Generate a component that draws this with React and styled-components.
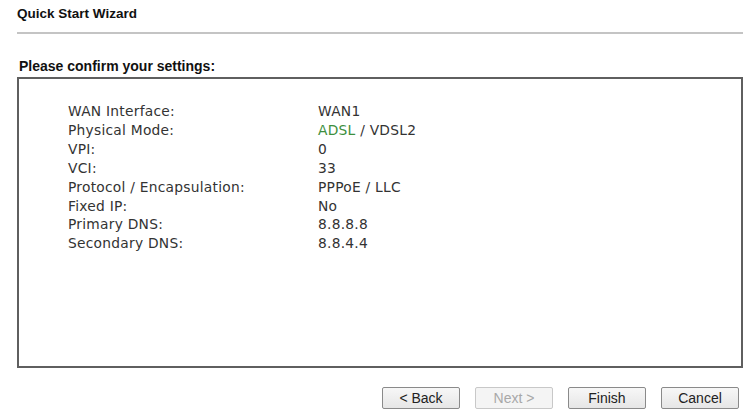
import React from "react";
import styled, { createGlobalStyle } from "styled-components";

const Global = createGlobalStyle`
  html, body { margin: 0; padding: 0; background: #fff; }
  body { font-family: "Liberation Sans", Arial, sans-serif; }
`;

const Page = styled.div`
  padding: 6px 8px 0 17px;
  width: 751px;
  box-sizing: border-box;
`;

const Title = styled.div`
  font-weight: bold;
  font-size: 13.5px;
  color: #111;
  line-height: 16px;
  padding-bottom: 10px;
  border-bottom: 2px solid #c4c4c4;
`;

const Subtitle = styled.div`
  font-weight: bold;
  font-size: 14px;
  color: #111;
  margin-top: 24px;
  padding-left: 2px;
  line-height: 17px;
`;

const Box = styled.div`
  margin-top: 2px;
  height: 264px;
  border: 2px solid #5f5f5f;
  padding: 23px 0 0 49px;
  box-sizing: content-box;
`;

const Grid = styled.div`
  display: grid;
  grid-template-columns: 250px auto;
  font-family: "DejaVu Sans", Verdana, sans-serif;
  font-size: 13.8px;
  letter-spacing: 0.25px;
  line-height: 18.9px;
  color: #333;
`;

const Green = styled.span`
  color: #3d8f3d;
`;

const Buttons = styled.div`
  display: flex;
  justify-content: flex-end;
  gap: 15px;
  margin-top: 19px;
  padding-right: 4px;
`;

const Button = styled.button`
  width: 78px;
  height: 22px;
  font-family: "Liberation Sans", Arial, sans-serif;
  font-size: 14px;
  padding: 0;
  border-radius: 2px;
  border: 1px solid ${(p) => (p.disabled ? "#c8c8c8" : "#8a8a8a")};
  background: ${(p) => (p.disabled ? "#f4f4f4" : "linear-gradient(#f7f7f7, #e6e6e6)")};
  color: ${(p) => (p.disabled ? "#a8a8a8" : "#222")};
`;

const rows = [
  ["WAN Interface:", "WAN1"],
  ["Physical Mode:", <><Green>ADSL</Green> / VDSL2</>],
  ["VPI:", "0"],
  ["VCI:", "33"],
  ["Protocol / Encapsulation:", "PPPoE / LLC"],
  ["Fixed IP:", "No"],
  ["Primary DNS:", "8.8.8.8"],
  ["Secondary DNS:", "8.8.4.4"],
];

export default function App() {
  return (
    <Page>
      <Global />
      <Title>Quick Start Wizard</Title>
      <Subtitle>Please confirm your settings:</Subtitle>
      <Box>
        <Grid>
          {rows.map(([k, v], i) => (
            <React.Fragment key={i}>
              <span>{k}</span>
              <span>{v}</span>
            </React.Fragment>
          ))}
        </Grid>
      </Box>
      <Buttons>
        <Button>&lt; Back</Button>
        <Button disabled>Next &gt;</Button>
        <Button>Finish</Button>
        <Button>Cancel</Button>
      </Buttons>
    </Page>
  );
}
